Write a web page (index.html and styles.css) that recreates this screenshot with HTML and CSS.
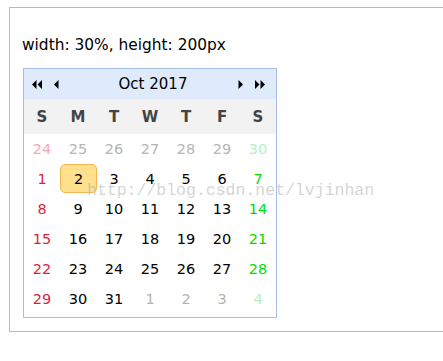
FILE: index.html
```html
<!DOCTYPE html>
<html lang="en">
<head>
    <meta charset="UTF-8">
    <title>Calendar</title>
    <link rel="stylesheet" href="styles.css">
</head>
<body>
    <div class="panel">
        <p class="caption">width: 30%, height: 200px</p>

        <div class="calendar">
            <div class="cal-head">
                <span class="nav">
                    <svg width="10" height="9" viewBox="0 0 10 9"><path d="M0 4.5L4.5 0V9Z M5.5 4.5L10 0V9Z" fill="#000"/></svg>
                </span>
                <span class="nav">
                    <svg width="5" height="9" viewBox="0 0 5 9"><path d="M0 4.5L4.5 0V9Z" fill="#000"/></svg>
                </span>
                <span class="title">Oct 2017</span>
                <span class="nav">
                    <svg width="5" height="9" viewBox="0 0 5 9"><path d="M5 4.5L0.5 0V9Z" fill="#000"/></svg>
                </span>
                <span class="nav">
                    <svg width="10" height="9" viewBox="0 0 10 9"><path d="M4.5 4.5L0 0V9Z M10 4.5L5.5 0V9Z" fill="#000"/></svg>
                </span>
            </div>

            <div class="week">
                <span>S</span><span>M</span><span>T</span><span>W</span><span>T</span><span>F</span><span>S</span>
            </div>

            <div class="days">
                <span class="sun other">24</span><span class="other">25</span><span class="other">26</span><span class="other">27</span><span class="other">28</span><span class="other">29</span><span class="sat other">30</span>
                <span class="sun">1</span><span class="selected">2</span><span>3</span><span>4</span><span>5</span><span>6</span><span class="sat">7</span>
                <span class="sun">8</span><span>9</span><span>10</span><span>11</span><span>12</span><span>13</span><span class="sat">14</span>
                <span class="sun">15</span><span>16</span><span>17</span><span>18</span><span>19</span><span>20</span><span class="sat">21</span>
                <span class="sun">22</span><span>23</span><span>24</span><span>25</span><span>26</span><span>27</span><span class="sat">28</span>
                <span class="sun">29</span><span>30</span><span>31</span><span class="other">1</span><span class="other">2</span><span class="other">3</span><span class="sat other">4</span>
            </div>
        </div>
    </div>

    <div class="watermark">http://blog.csdn.net/lvjinhan</div>
</body>
</html>
```

FILE: styles.css
```css
body {
    margin: 0;
    overflow: hidden;
    background-color: #fff;
    color: #000;
    font-family: "DejaVu Sans", Verdana, sans-serif;
}

.panel {
    margin: 7px -20px 0 9px;
    height: 323px;
    border: 1px solid #a5bde3;
    padding: 0 0 0 13px;
}

.caption {
    margin: 27px 0 13px -1px;
    font-size: 15.4px;
    line-height: 20px;
}

.calendar {
    width: 252px;
    border: 1px solid #a5bde3;
    padding-bottom: 3px;
}

.cal-head {
    display: flex;
    align-items: center;
    height: 30px;
    padding: 0 11px 0 8px;
    background-color: #dfeafd;
}

.cal-head .nav {
    display: flex;
    align-items: center;
    margin-right: 12px;
}

.cal-head .nav:last-child {
    margin-right: 0;
}

.cal-head .title {
    flex: 1;
    text-align: center;
    font-size: 15px;
    padding-right: 3px;
}

.week {
    display: grid;
    grid-template-columns: repeat(7, 36px);
    height: 35px;
    align-items: center;
    background-color: #f2f2f2;
    font-size: 15px;
    font-weight: bold;
    color: #444;
    text-align: center;
}

.days {
    display: grid;
    grid-template-columns: repeat(7, 36px);
    grid-auto-rows: 30px;
    font-size: 14.5px;
    text-align: center;
}

.days span {
    display: flex;
    align-items: center;
    justify-content: center;
    box-sizing: border-box;
}

.days .sun {
    color: #dc1f3c;
}

.days .sat {
    color: #00dd00;
}

.days .other {
    color: #b5b5b5;
}

.days .sun.other {
    color: #f3a8b4;
}

.days .sat.other {
    color: #b6f2be;
}

.days .selected {
    background-color: #ffe08c;
    border: 1px solid #f6b54e;
    border-radius: 5px;
    height: 29px;
    width: 37px;
}

/* watermark over the calendar */
.watermark {
    position: absolute;
    left: 87px;
    top: 181px;
    font-family: "Liberation Mono", monospace;
    font-size: 16.5px;
    color: rgba(170, 170, 170, 0.5);
    pointer-events: none;
}
```
